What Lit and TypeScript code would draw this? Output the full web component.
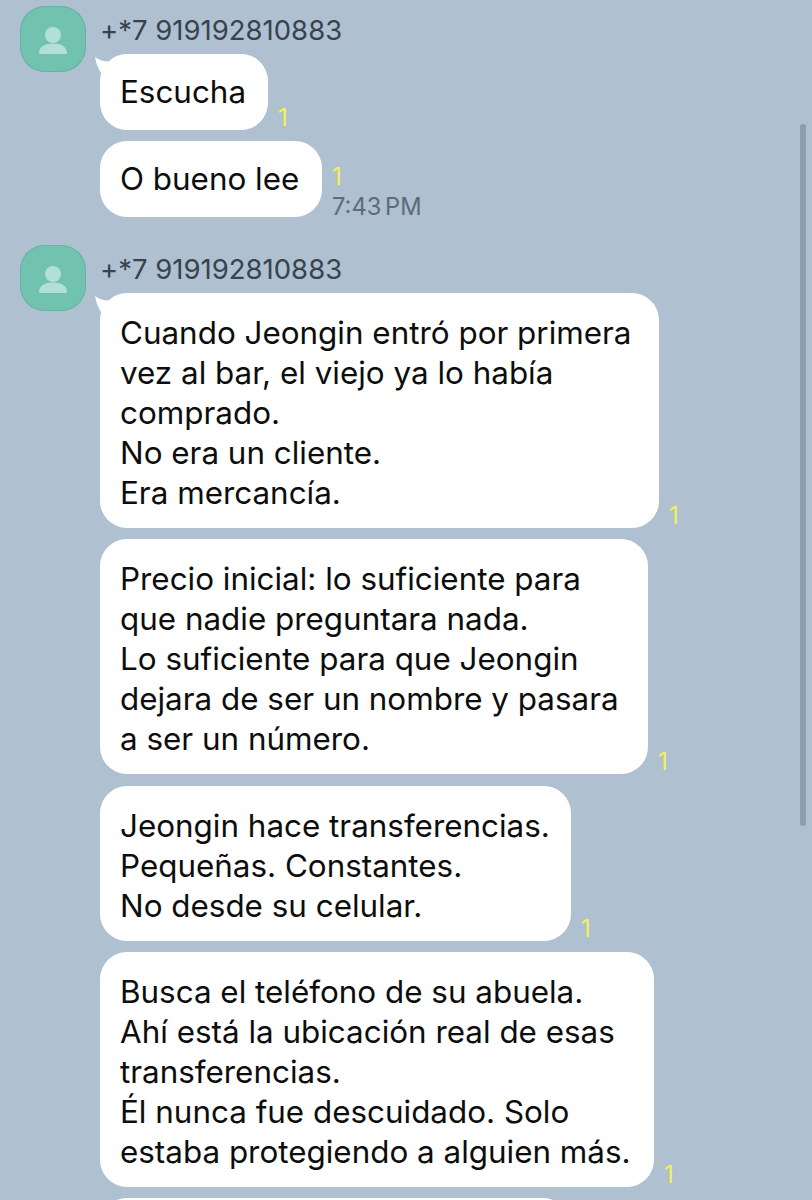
import { LitElement, html, css } from "lit";
import { customElement } from "lit/decorators.js";
import { classMap } from "lit/directives/class-map.js";

interface Msg { lines: string[]; width: number; time?: string; }
interface Group { name: string; msgs: Msg[]; }

const GROUPS: Group[] = [
  { name: "+*7 919192810883", msgs: [
    { lines: ["Escucha"], width: 168 },
    { lines: ["O bueno lee"], width: 222, time: "7:43 PM" },
  ]},
  { name: "+*7 919192810883", msgs: [
    { lines: ["Cuando Jeongin entró por primera", "vez al bar, el viejo ya lo había", "comprado.", "No era un cliente.", "Era mercancía."], width: 559 },
    { lines: ["Precio inicial: lo suficiente para", "que nadie preguntara nada.", "Lo suficiente para que Jeongin", "dejara de ser un nombre y pasara", "a ser un número."], width: 548 },
    { lines: ["Jeongin hace transferencias.", "Pequeñas. Constantes.", "No desde su celular."], width: 471 },
    { lines: ["Busca el teléfono de su abuela.", "Ahí está la ubicación real de esas", "transferencias.", "Él nunca fue descuidado. Solo", "estaba protegiendo a alguien más."], width: 554 },
    { lines: [""], width: 470 },
  ]},
];

@customElement("app-root")
export class AppRoot extends LitElement {
  static styles = css`
    :host { display: block; position: relative; width: 812px; height: 1200px; overflow: hidden; background: #afc0d0; font-family: Inter, "Liberation Sans", sans-serif; }
    .list { display: flex; flex-direction: column; gap: 27.67px; padding: 6px 0 0 20px; }
    .group { display: flex; gap: 14px; }
    .avatar { flex: none; width: 66px; height: 66px; border-radius: 25px; background: #72c2b0; box-shadow: inset 0 0 0 1px #66b3a2; display: flex; align-items: center; justify-content: center; }
    .avatar svg { margin-top: 3px; }
    .col { display: flex; flex-direction: column; gap: 11.33px; position: relative; }
    .name { font-size: 27.5px; line-height: 25px; height: 25px; padding-top: 12px; margin-bottom: -11.33px; color: #39434e; white-space: nowrap; }
    .row { display: flex; align-items: flex-end; gap: 10px; }
    .name + .row { margin-top: 11px; }
    .bubble { position: relative; box-sizing: border-box; background: #fff; border-radius: 27px; padding: 18px 0 18px 20px; font-size: 31.4px; line-height: 40px; color: #0d0d0d; white-space: nowrap; flex: none; }
    .bubble.multi { padding: 20px 0 15px 20px; }
    .tail { position: absolute; left: -6px; top: 3px; width: 18px; height: 18px; }
    .meta { display: flex; flex-direction: column; }
    .count { color: #f4f05a; font-size: 24px; font-weight: 400; line-height: 24px; }
    .time { color: #5f6b78; font-size: 23.7px; line-height: 24px; white-space: nowrap; word-spacing: -3px; margin: 6px 0 -2px; }
    .scroll { position: absolute; left: 800px; top: 124px; width: 6px; height: 702px; border-radius: 3px; background: #8c9dac; }
  `;

  render() {
    return html`
      <div class="list">
        ${GROUPS.map((g) => html`
          <section class="group">
            <div class="avatar">
              <svg width="28" height="27" viewBox="0 0 28 27">
                <circle cx="14" cy="8" r="8" fill="#b2e0d6"></circle>
                <path d="M1.5 27 Q0 27 0 25.5 C0.5 19.5 6 16.5 14 16.5 C22 16.5 27.5 19.5 28 25.5 Q28 27 26.5 27 Z" fill="#b2e0d6"></path>
              </svg>
            </div>
            <div class="col">
              <div class="name">${g.name}</div>
              ${g.msgs.map((m, i) => html`
                <div class="row">
                  <div class=${classMap({ bubble: true, multi: m.lines.length > 1 })} style="width:${m.width}px">
                    ${i === 0 ? html`<svg class="tail" viewBox="0 0 18 18"><path d="M1 0 C5 3 10 5 16 4.5 L10 18 L7 16 C4 11 2 6 1 0 Z" fill="#fff"></path></svg>` : ""}
                    ${m.lines.map((l, j) => html`${j ? html`<br />` : ""}${l || html`&nbsp;`}`)}
                  </div>
                  ${m.lines[0] ? html`<div class="meta">
                    <span class="count">1</span>
                    ${m.time ? html`<span class="time">${m.time}</span>` : ""}
                  </div>` : ""}
                </div>
              `)}
            </div>
          </section>
        `)}
      </div>
      <div class="scroll"></div>
    `;
  }
}
